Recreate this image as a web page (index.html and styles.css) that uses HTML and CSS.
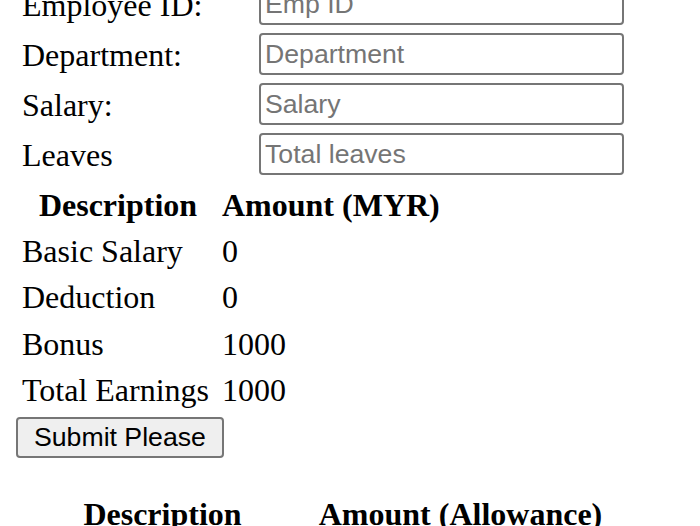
FILE: index.html
```html
<!DOCTYPE html>
<html lang="en">
<head>
  <meta charset="UTF-8" />
  <meta name="viewport" content="width=device-width, initial-scale=1.0"/>
  <title>Payroll</title>
  <link rel="stylesheet" href="styles.css">
</head>
<body>

  <!-- Employee details -->
  <form id="payForm" class="pay-form">
    <table class="details">
      <tr>
        <td class="label">Employee ID:</td>
        <td><input type="text" placeholder="Emp ID" /></td>
      </tr>
      <tr>
        <td class="label">Department:</td>
        <td><input type="text" placeholder="Department" /></td>
      </tr>
      <tr>
        <td class="label">Salary:</td>
        <td><input type="text" placeholder="Salary" /></td>
      </tr>
      <tr>
        <td class="label">Leaves</td>
        <td><input type="text" placeholder="Total leaves" /></td>
      </tr>
    </table>

    <!-- Earnings summary -->
    <table class="summary">
      <tr>
        <th>Description</th>
        <th>Amount (MYR)</th>
      </tr>
      <tr><td>Basic Salary</td><td>0</td></tr>
      <tr><td>Deduction</td><td>0</td></tr>
      <tr><td>Bonus</td><td>1000</td></tr>
      <tr><td>Total Earnings</td><td>1000</td></tr>
    </table>

    <button type="submit">Submit Please</button>
  </form>

  <!-- Allowance table -->
  <table class="allowance">
    <tr>
      <th class="col-desc">Description</th>
      <th class="col-amount">Amount (Allowance)</th>
    </tr>
    <tr><td>Travel</td><td>0</td></tr>
  </table>

  <script>
    document.getElementById("payForm").addEventListener("submit", function (e) {
      e.preventDefault();
    });
  </script>

</body>
</html>
```

FILE: styles.css
```css
* { box-sizing: border-box; }
body { margin: 0; padding: 0 16px; background: #fff; color: #000; font-family: "Liberation Serif", "Times New Roman", serif; font-size: 32px; }

table { border-spacing: 4px; }
td, th { padding: 2px; }

.pay-form { margin: 0 0 32px; }
.details { margin-top: -23px; }
.details .label { width: 233px; padding-top: 4px; }
.details input { display: block; width: 365px; height: 42px; padding: 2px 4px; border: 2px solid #767676; border-radius: 4px; font-family: "Liberation Sans", Arial, sans-serif; font-size: 26.67px; }
.details input::placeholder { color: #757575; }

.summary th { height: 41px; }
.summary td { height: 42.5px; }
.summary td:first-child { width: 196px; }

button { height: 41px; margin-top: 1px; padding: 2px 16px; border: 2px solid #767676; border-radius: 4px; background: #efefef; color: #000; font-family: "Liberation Sans", Arial, sans-serif; font-size: 26.67px; }

.allowance { margin-top: 1px; }
.allowance .col-desc { width: 285px; }
.allowance .col-amount { width: 303px; }
```
